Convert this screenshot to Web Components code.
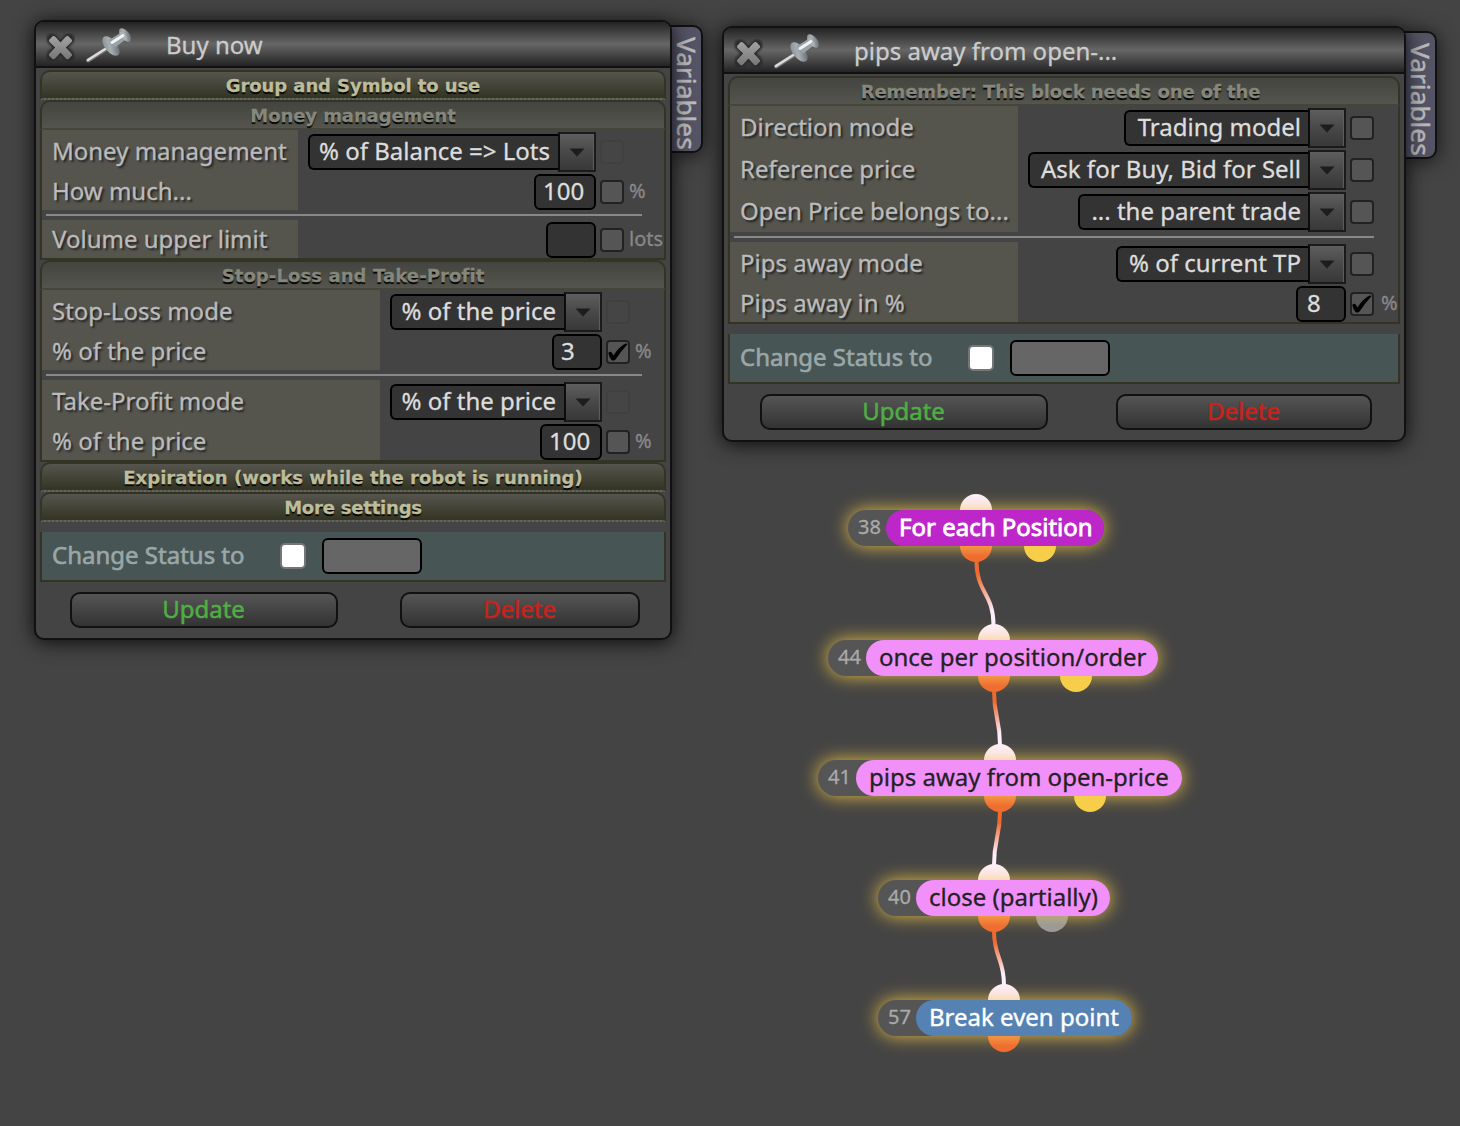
<!DOCTYPE html>
<html lang="en">
<head>
<meta charset="utf-8">
<title>Blocks</title>
<style>
    html, body {
        margin: 0;
        height: 100%;
        overflow: hidden;
        background: #444;
    }

    body {
        font-family: 'Noto Sans', sans-serif;
        font-size: 24px;
        color: #ddd;
    }
</style>
</head>
<body>
<block-desktop></block-desktop>

<script>
class BlockDesktop extends HTMLElement {
    constructor() {
        super();
        this.attachShadow({ mode: 'open' });
    }

    connectedCallback() {
        this.shadowRoot.innerHTML = /*html*/`
        <style>
            :host {
                display: block;
                position: relative;
                width: 1460px;
                height: 1126px;
                overflow: hidden;
                background: #444;
            }

            block-window, flow-node, flow-links { position: absolute; }
            flow-links { left: 0; top: 0; }
            #buy { left: 34px; top: 20px; width: 638px; }
            #pips { left: 722px; top: 26px; width: 684px; }
        </style>

        <block-window id="buy" heading="Buy now">
            <settings-group heading="Group and Symbol to use" folded></settings-group>
            <settings-group heading="Money management" style="--label: 256px; --unit: 40px">
                <settings-row label="Money management">
                    <select-box style="width: 288px">% of Balance =&gt; Lots</select-box>
                    <check-box disabled></check-box>
                </settings-row>
                <settings-row label="How much..." unit="%">
                    <value-box style="width: 62px">100</value-box>
                    <check-box></check-box>
                </settings-row>
                <row-line></row-line>
                <settings-row label="Volume upper limit" unit="lots">
                    <value-box></value-box>
                    <check-box></check-box>
                </settings-row>
            </settings-group>
            <settings-group heading="Stop-Loss and Take-Profit" style="--label: 338px; --unit: 34px; --spacing: .1px">
                <settings-row label="Stop-Loss mode">
                    <select-box style="width: 212px">% of the price</select-box>
                    <check-box disabled></check-box>
                </settings-row>
                <settings-row label="% of the price" unit="%">
                    <value-box>3</value-box>
                    <check-box checked></check-box>
                </settings-row>
                <row-line></row-line>
                <settings-row label="Take-Profit mode">
                    <select-box style="width: 212px">% of the price</select-box>
                    <check-box disabled></check-box>
                </settings-row>
                <settings-row label="% of the price" unit="%">
                    <value-box style="width: 62px">100</value-box>
                    <check-box></check-box>
                </settings-row>
            </settings-group>
            <settings-group heading="Expiration (works while the robot is running)" folded style="--spacing: .05px"></settings-group>
            <settings-group heading="More settings" folded style="--spacing: -.2px"></settings-group>
            <status-bar></status-bar>
            <push-button slot="actions" style="width: 268px; color: #4fae43">Update</push-button>
            <push-button slot="actions" style="width: 240px; color: #c8231b">Delete</push-button>
        </block-window>

        <block-window id="pips" heading="pips away from open-..." style="--pad-left: 36px; --pad-right: 32px">
            <settings-group heading="Remember: This block needs one of the" style="--label: 288px; --unit: 24px; --unit-pad: 7px; --line-end: 24px; --heading-end: 7px; --text-end: 7px">
                <settings-row label="Direction mode">
                    <select-box style="width: 222px">Trading model</select-box>
                    <check-box></check-box>
                </settings-row>
                <settings-row label="Reference price">
                    <select-box style="width: 318px">Ask for Buy, Bid for Sell</select-box>
                    <check-box></check-box>
                </settings-row>
                <settings-row label="Open Price belongs to...">
                    <select-box style="width: 268px">... the parent trade</select-box>
                    <check-box></check-box>
                </settings-row>
                <row-line></row-line>
                <settings-row label="Pips away mode">
                    <select-box style="width: 230px">% of current TP</select-box>
                    <check-box></check-box>
                </settings-row>
                <settings-row label="Pips away in %" unit="%">
                    <value-box style="padding-left: 9px">8</value-box>
                    <check-box checked></check-box>
                </settings-row>
            </settings-group>
            <status-bar></status-bar>
            <push-button slot="actions" style="width: 288px; color: #4fae43">Update</push-button>
            <push-button slot="actions" style="width: 256px; color: #c8231b">Delete</push-button>
        </block-window>

        <flow-node number="38" in="128" out="128" next="192"
            style="left: 848px; top: 510px; width: 256px; --fill: #bd27c9; --ink: #fff; --stroke: .8px">For each Position</flow-node>
        <flow-node number="44" in="166" out="166" next="248"
            style="left: 828px; top: 640px; width: 330px">once per position/order</flow-node>
        <flow-node number="41" in="182" out="182" next="272"
            style="left: 818px; top: 760px; width: 364px">pips away from open-price</flow-node>
        <flow-node number="40" in="116" out="116" next="174"
            style="left: 878px; top: 880px; width: 232px; --next: linear-gradient(#b5a77c, #9c9a94 60%)">close (partially)</flow-node>
        <flow-node number="57" in="126" out="126"
            style="left: 878px; top: 1000px; width: 254px; --fill: #5582b3; --ink: #fff; --stroke: .4px">Break even point</flow-node>
        <flow-links></flow-links>
        `;
    }
}

class BlockWindow extends HTMLElement {
    constructor() {
        super();
        this.attachShadow({ mode: 'open' });
    }

    connectedCallback() {
        this.shadowRoot.innerHTML = /*html*/`
        <style>
            :host {
                display: block;
                isolation: isolate;
                -webkit-text-stroke-width: .3px;
            }

            .window {
                position: relative;
                box-sizing: border-box;
                border: 2px solid #111;
                border-radius: 10px;
                background: #444;
                box-shadow: 0 2px 20px rgba(0, 0, 0, .85);
            }

            header {
                display: flex;
                align-items: center;
                height: 44px;
                border-bottom: 2px solid #111;
                border-radius: 8px 8px 0 0;
                background: linear-gradient(#232323, #666 50%, #232323);
                color: #ccc;
            }

            header svg { flex: none; }
            .close { margin: 5px 0 0 9px; }
            .pin { margin: 2px 0 0 8px; }
            h1 {
                margin: 2px 0 0 33px;
                font-size: 24px;
                line-height: 42px;
                font-weight: 400;
                white-space: nowrap;
            }

            .content { padding: 2px 4px 0; }

            footer {
                display: flex;
                justify-content: space-between;
                padding: 10px var(--pad-right, 30px) 10px var(--pad-left, 34px);
            }

            .tab {
                position: absolute;
                z-index: -1;
                left: 100%;
                top: 3px;
                display: flex;
                align-items: center;
                box-sizing: border-box;
                width: 33px;
                height: 128px;
                padding: 10px 0 0 3px;
                border: 2px solid #111;
                border-left-width: 0;
                border-radius: 0 10px 10px 0;
                background: #555466;
                box-shadow: 0 2px 20px rgba(0, 0, 0, .7);
                color: #bbb;
                writing-mode: vertical-rl;
                font-size: 26.3px;
                line-height: 28px;
                -webkit-text-stroke-width: .5px;
            }
        </style>
        <div class="window">
            <header>
                <svg class="close" width="32" height="32" viewBox="0 0 32 32">
                    <defs>
                        <linearGradient id="metal" x1="0" y1="0" x2="0" y2="1">
                            <stop offset="0" stop-color="#a2a2a2"/>
                            <stop offset="1" stop-color="#777"/>
                        </linearGradient>
                        <filter id="soft" x="-30%" y="-30%" width="160%" height="160%"><feGaussianBlur stdDeviation=".9"/></filter>
                    </defs>
                    <path d="M7 8 L24 25 M24 8 L7 25" stroke="#292929" stroke-width="11" stroke-linecap="round" filter="url(#soft)"/>
                    <path d="M4 9 L7.500 5.200 Q9 4.500 10.500 6 L15.500 11.500 L20.500 6 Q22 4.500 23.500 5.200 L27 9 Q27.500 10.500 26 11.500 L20.800 16.500 L26 22 Q27.500 23.500 27 24.500 L23.500 28 Q21.500 28.700 20.500 27 L15.500 21.500 L10.500 27 Q9 28.700 7.500 28 L4 24.500 Q3.500 23 5 22 L10.200 16.500 L5 11.500 Q3.500 10 4 9Z" fill="url(#metal)"/>
                </svg>
                <svg class="pin" width="48" height="38" viewBox="0 0 48 38">
                    <defs>
                        <linearGradient id="steel" x1="0" y1="0" x2="1" y2="1">
                            <stop offset="0" stop-color="#7f878d"/>
                            <stop offset=".45" stop-color="#a9b0b4"/>
                            <stop offset="1" stop-color="#535b62"/>
                        </linearGradient>
                        <filter id="blur"><feGaussianBlur stdDeviation=".5"/></filter>
                    </defs>
                    <g filter="url(#blur)">
                        <path d="M3 34.500 L25 20.500" stroke="#777" stroke-width="4" stroke-linecap="round"/>
                        <path d="M3 34 L25 20" stroke="#ddd" stroke-width="2.400" stroke-linecap="round"/>
                        <ellipse cx="26" cy="20" rx="6" ry="11.500" transform="rotate(-39 26 20)" fill="url(#steel)"/>
                        <path d="M23.500 14.500 L36 6.500 L40.500 13.500 L30 21.500Z" fill="#99a2a7"/>
                        <ellipse cx="40" cy="9" rx="4.200" ry="8" transform="rotate(-39 40 9)" fill="url(#steel)"/>
                        <ellipse cx="38.200" cy="10" rx="2.200" ry="5" transform="rotate(-39 38.200 10)" fill="#a9b1b6"/>
                        <path d="M27 16.500 L38 9.500" stroke="#f3f5f5" stroke-width="2.800" stroke-linecap="round"/>
                    </g>
                </svg>
                <h1>${this.getAttribute('heading')}</h1>
            </header>
            <div class="content"><slot></slot></div>
            <footer><slot name="actions"></slot></footer>
            <div class="tab">Variables</div>
        </div>
        `;
    }
}

class SettingsGroup extends HTMLElement {
    constructor() {
        super();
        this.attachShadow({ mode: 'open' });
    }

    connectedCallback() {
        this.shadowRoot.innerHTML = /*html*/`
        <style>
            :host { display: block; }

            h2 {
                box-sizing: border-box;
                height: 30px;
                margin: 0;
                padding-right: var(--heading-end, 0);
                border: 2px solid #333423;
                border-bottom-color: #45463a;
                border-radius: 10px 10px 0 0;
                background: linear-gradient(#444440, #55554e);
                color: #86877c;
                font: bold 18px/27px 'DejaVu Sans', sans-serif;
                letter-spacing: var(--spacing, -.08px);
                text-align: center;
                text-shadow: 0 2px 1px #000;
                white-space: nowrap;
            }

            :host([folded]) h2 {
                border-bottom: 2px dotted #66675c;
                background: linear-gradient(#55554e, #333423);
                color: #bdbc9b;
            }

            .rows {
                border: 2px solid #333423;
                border-top: 0;
            }

            :host([folded]) .rows { display: none; }
        </style>
        <h2>${this.getAttribute('heading')}</h2>
        <div class="rows"><slot></slot></div>
        `;
    }
}

class SettingsRow extends HTMLElement {
    constructor() {
        super();
        this.attachShadow({ mode: 'open' });
    }

    connectedCallback() {
        this.shadowRoot.innerHTML = /*html*/`
        <style>
            :host {
                display: grid;
                grid-template-columns: var(--label) 1fr var(--unit);
            }

            .label {
                display: flex;
                align-items: center;
                padding-left: 10px;
                background: #55554e;
                color: #bbb;
                text-shadow: 2px 2px 2px #222;
                line-height: 32px;
                white-space: nowrap;
            }

            .controls {
                display: flex;
                justify-content: flex-end;
                align-items: center;
                gap: 4px;
                padding-top: 2px;
            }

            .unit {
                align-self: center;
                padding-left: var(--unit-pad, 5px);
                color: #888;
                font-size: 20px;
                line-height: 30px;
            }
        </style>
        <div class="label">${this.getAttribute('label')}</div>
        <div class="controls"><slot></slot></div>
        <div class="unit">${this.getAttribute('unit') || ''}</div>
        `;
    }
}

class RowLine extends HTMLElement {
    constructor() {
        super();
        this.attachShadow({ mode: 'open' });
    }

    connectedCallback() {
        this.shadowRoot.innerHTML = /*html*/`
        <style>
            :host { display: block; padding: 4px var(--line-end, 22px) 4px 4px; }
            div { height: 2px; background: #888; }
        </style>
        <div></div>
        `;
    }
}

class SelectBox extends HTMLElement {
    constructor() {
        super();
        this.attachShadow({ mode: 'open' });
    }

    connectedCallback() {
        this.shadowRoot.innerHTML = /*html*/`
        <style>
            :host {
                display: flex;
                align-items: center;
                color: #ddd;
            }

            .text {
                flex: 1;
                box-sizing: border-box;
                height: 36px;
                padding-right: var(--text-end, 8px);
                border: 2px solid #000;
                border-right: 0;
                border-radius: 6px 0 0 6px;
                background: #333;
                line-height: 29px;
                text-align: right;
                white-space: nowrap;
            }

            .arrow {
                display: grid;
                place-items: center;
                box-sizing: border-box;
                width: 38px;
                height: 40px;
                border: 2px solid #1b1b1b;
                border-left-color: #0c0c0c;
                background: linear-gradient(#5e5e5e, #484848 50%, #383838);
                box-shadow: inset -1px 1px 1px #606060;
            }
        </style>
        <div class="text"><slot></slot></div>
        <div class="arrow">
            <svg width="16" height="9" viewBox="0 0 16 9"><path d="M.5 .5 H15.500 L8 8.500Z" fill="#1d1d1d"/></svg>
        </div>
        `;
    }
}

class ValueBox extends HTMLElement {
    constructor() {
        super();
        this.attachShadow({ mode: 'open' });
    }

    connectedCallback() {
        this.shadowRoot.innerHTML = /*html*/`
        <style>
            :host {
                display: block;
                box-sizing: border-box;
                width: 50px;
                height: 36px;
                padding-left: 7px;
                border: 2px solid #000;
                border-radius: 6px;
                background: #333;
                color: #ddd;
                line-height: 29px;
            }
        </style>
        <slot></slot>
        `;
    }
}

class CheckBox extends HTMLElement {
    constructor() {
        super();
        this.attachShadow({ mode: 'open' });
    }

    connectedCallback() {
        const mark = this.hasAttribute('checked')
            ? '<svg width="22" height="20" viewBox="0 0 22 20"><path d="M1.300 11 Q2.500 9 4.300 10 Q5.600 11.500 6.500 13.500 Q11 6 17.500 2 Q19.500 1 20.500 2.200 Q14 9 8.500 17.500 Q6.500 19.500 4.500 18 Q2 15 1.300 11Z"/></svg>'
            : '';
        this.shadowRoot.innerHTML = /*html*/`
        <style>
            :host {
                display: grid;
                place-items: center;
                box-sizing: border-box;
                width: 24px;
                height: 24px;
                border: 2px solid #222;
                border-radius: 4px;
                background: #555;
            }

            :host([disabled]) { opacity: .1; }
            svg { margin: 0 -1px; }
        </style>
        ${mark}
        `;
    }
}

class StatusBar extends HTMLElement {
    constructor() {
        super();
        this.attachShadow({ mode: 'open' });
    }

    connectedCallback() {
        this.shadowRoot.innerHTML = /*html*/`
        <style>
            :host {
                display: flex;
                align-items: center;
                box-sizing: border-box;
                height: 50px;
                margin-top: 10px;
                padding-left: 10px;
                border: 2px solid #333423;
                border-top: 0;
                background: #485555;
                color: #9aa7a7;
            }

            .label {
                width: 228px;
                margin-bottom: 2px;
                line-height: 32px;
                -webkit-text-stroke-width: .6px;
            }

            .check {
                box-sizing: border-box;
                width: 26px;
                height: 26px;
                border: 2px solid #767676;
                border-radius: 5px;
                background: #fff;
            }

            .field {
                box-sizing: border-box;
                width: 100px;
                height: 36px;
                margin-left: 16px;
                border: 2px solid #000;
                border-radius: 6px;
                background: #666;
            }
        </style>
        <div class="label">Change Status to</div>
        <div class="check"></div>
        <div class="field"></div>
        `;
    }
}

class PushButton extends HTMLElement {
    constructor() {
        super();
        this.attachShadow({ mode: 'open' });
    }

    connectedCallback() {
        this.shadowRoot.innerHTML = /*html*/`
        <style>
            :host {
                display: block;
                box-sizing: border-box;
                height: 36px;
                padding-right: 1px;
                border: 2px solid #111;
                border-radius: 10px;
                background: linear-gradient(#555, #333);
                line-height: 29px;
                text-align: center;
                -webkit-text-stroke-width: .5px;
                cursor: pointer;
            }
        </style>
        <slot></slot>
        `;
    }
}

class FlowNode extends HTMLElement {
    constructor() {
        super();
        this.attachShadow({ mode: 'open' });
    }

    connectedCallback() {
        const port = (name) => this.hasAttribute(name)
            ? `<i class="${name}" style="left: ${this.getAttribute(name) - 16}px"></i>`
            : '';
        this.shadowRoot.innerHTML = /*html*/`
        <style>
            :host {
                display: flex;
                box-sizing: border-box;
                height: 36px;
                border-radius: 18px;
                background: #555;
                box-shadow: 0 0 18px #e8bf45;
            }

            .number {
                width: 38px;
                padding-left: 10px;
                box-sizing: border-box;
                color: #aaa;
                font-size: 20px;
                line-height: 34px;
                -webkit-text-stroke-width: .3px;
            }

            .name {
                flex: 1;
                padding-left: 13px;
                border-radius: 18px;
                background: var(--fill, #f190f9);
                color: var(--ink, #222);
                -webkit-text-stroke: var(--stroke, .3px) var(--ink, #222);
                line-height: 33px;
                white-space: nowrap;
            }

            i {
                position: absolute;
                width: 32px;
                height: 16px;
            }

            .in {
                bottom: 100%;
                border-radius: 16px 16px 0 0;
                background: linear-gradient(#fdeefb, #fae6e0 60%, #fadcab);
            }

            .out, .next { top: 100%; border-radius: 0 0 16px 16px; }
            .out { background: linear-gradient(#f29645, #ef6d2f 65%); }
            .next { background: var(--next, #f7ce4a); }
        </style>
        <div class="number">${this.getAttribute('number')}</div>
        <div class="name"><slot></slot></div>
        ${port('in')}${port('out')}${port('next')}
        `;
    }
}

class FlowLinks extends HTMLElement {
    constructor() {
        super();
        this.attachShadow({ mode: 'open' });
    }

    connectedCallback() {
        // x1, y1, x2, y2 of every connection
        const links = [
            [976.5, 561, 993.5, 625],
            [994, 691, 1000, 745],
            [1000, 811, 994, 865],
            [994, 931, 1004, 985]
        ];
        const paths = links.map(([x1, y1, x2, y2], i) => {
            const bend = (y2 - y1) * 0.5;
            return `
            <linearGradient id="link${i}" gradientUnits="userSpaceOnUse" x1="${x1}" y1="${y1}" x2="${x2}" y2="${y2}">
                <stop offset=".2" stop-color="#ee6a2f"/>
                <stop offset=".8" stop-color="#fdeefb"/>
            </linearGradient>
            <path d="M${x1} ${y1} C${x1} ${y1 + bend} ${x2} ${y2 - bend} ${x2} ${y2}" stroke="url(#link${i})"/>`;
        }).join('');
        this.shadowRoot.innerHTML = /*html*/`
        <style>
            :host { display: block; pointer-events: none; }
            svg { display: block; }
            path { fill: none; stroke-width: 4; }
        </style>
        <svg width="1460" height="1126">${paths}</svg>
        `;
    }
}

customElements.define('block-desktop', BlockDesktop);
customElements.define('block-window', BlockWindow);
customElements.define('settings-group', SettingsGroup);
customElements.define('settings-row', SettingsRow);
customElements.define('row-line', RowLine);
customElements.define('select-box', SelectBox);
customElements.define('value-box', ValueBox);
customElements.define('check-box', CheckBox);
customElements.define('status-bar', StatusBar);
customElements.define('push-button', PushButton);
customElements.define('flow-node', FlowNode);
customElements.define('flow-links', FlowLinks);
</script>
</body>
</html>
